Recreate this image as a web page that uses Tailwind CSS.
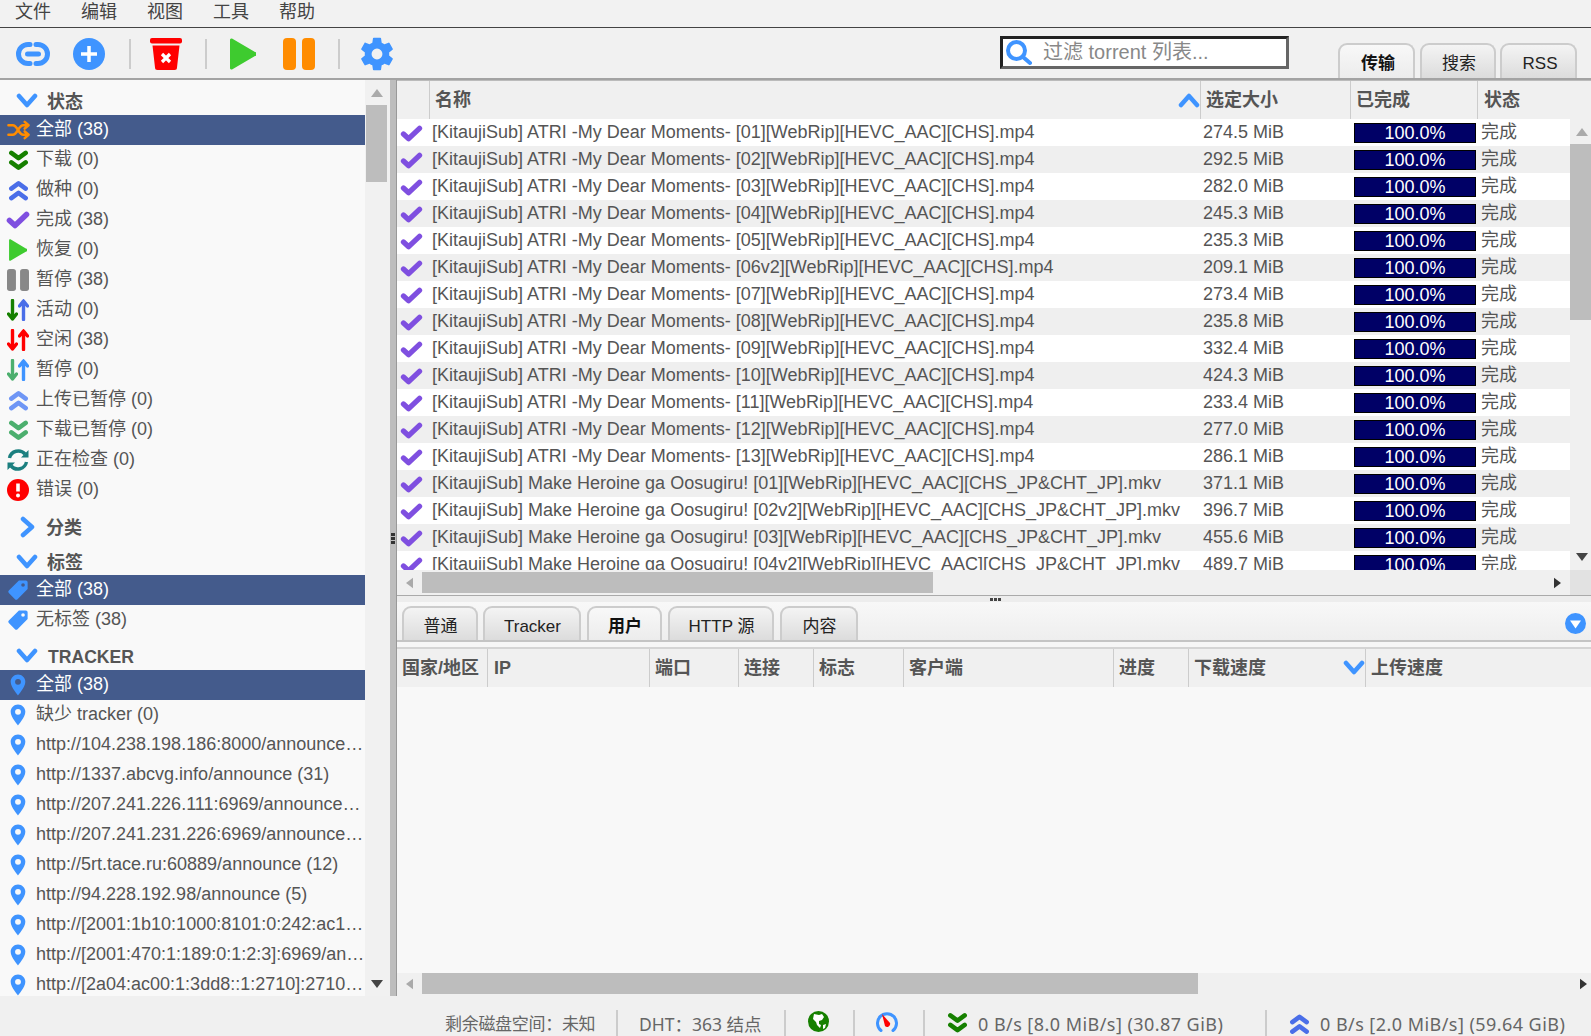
<!DOCTYPE html>
<html lang="zh-CN">
<head>
  <meta charset="UTF-8" />
  <title>qBittorrent WebUI</title>
  <script src="https://cdn.jsdelivr.net/npm/@tailwindcss/browser@4"></script>
</head>
<body class="h-[1036px] w-[1591px] overflow-hidden bg-[#f0f0f0] text-[18px] text-[#555] font-['Liberation_Sans','Noto_Sans_CJK_SC',sans-serif]">
  <svg class="hidden">
    <symbol id="chev-down" viewBox="0 0 22 16"><path d="M3 3l8 9 8-9" fill="none" stroke="currentColor" stroke-width="4.5" stroke-linecap="round" stroke-linejoin="round"/></symbol>
    <symbol id="chev-up" viewBox="0 0 22 16"><path d="M3 13l8-9 8 9" fill="none" stroke="currentColor" stroke-width="4.5" stroke-linecap="round" stroke-linejoin="round"/></symbol>
    <symbol id="chev-right" viewBox="0 0 16 22"><path d="M3 3l9 8-9 8" fill="none" stroke="currentColor" stroke-width="4.5" stroke-linecap="round" stroke-linejoin="round"/></symbol>
    <symbol id="dbl-down" viewBox="0 0 22 22"><path d="M3.500 3l7.500 5.500 7.500-5.500M3.500 13l7.500 5.500 7.500-5.500" fill="none" stroke="currentColor" stroke-width="4.800" stroke-linecap="round" stroke-linejoin="round"/></symbol>
    <symbol id="dbl-up" viewBox="0 0 22 22"><path d="M3.500 9l7.500-5.500 7.500 5.500M3.500 19l7.500-5.500 7.500 5.500" fill="none" stroke="currentColor" stroke-width="4.800" stroke-linecap="round" stroke-linejoin="round"/></symbol>
    <symbol id="check" viewBox="0 0 24 18"><path d="M3.500 9.500l5.500 5L20.500 3.500" fill="none" stroke="currentColor" stroke-width="5.600" stroke-linecap="round" stroke-linejoin="round"/></symbol>
    <symbol id="shuffle" viewBox="0 0 24 20"><path d="M1.500 5H6c5 0 6 10 11 10h5M1.500 15H6c5 0 6-10 11-10h5M18.500 1.500L22.500 5l-4 3.500M18.500 11.500l4 3.500-4 3.500" fill="none" stroke="currentColor" stroke-width="2.600" stroke-linecap="round" stroke-linejoin="round"/></symbol>
    <symbol id="play" viewBox="0 0 26 32"><path d="M2 0.500L25 14a2 2 0 0 1 0 4L2 31.500A1.500 1.500 0 0 1 0 30V2A1.500 1.500 0 0 1 2 0.500z" fill="currentColor"/></symbol>
    <symbol id="pause" viewBox="0 0 32 32"><rect x="0" y="0" width="13" height="32" rx="4" fill="currentColor"/><rect x="19" y="0" width="13" height="32" rx="4" fill="currentColor"/></symbol>
    <symbol id="arrow-down" viewBox="0 0 11 22"><path d="M5.500 20L1.500 15M5.500 20L9.500 15M5.500 20V1.500" fill="none" stroke="currentColor" stroke-width="3.400" stroke-linecap="round" stroke-linejoin="round"/></symbol>
    <symbol id="arrow-up" viewBox="0 0 11 22"><path d="M5.500 2L1.500 7M5.500 2L9.500 7M5.500 2v18.500" fill="none" stroke="currentColor" stroke-width="3.400" stroke-linecap="round" stroke-linejoin="round"/></symbol>
    <symbol id="tag" viewBox="0 0 24 24"><path fill-rule="evenodd" d="M13 1.500H20.500a2 2 0 0 1 2 2V11L11.500 22a2 2 0 0 1-2.800 0L2 15.300a2 2 0 0 1 0-2.800zM17.500 4.500a2 2 0 1 0 0 4 2 2 0 0 0 0-4z" fill="currentColor"/></symbol>
    <symbol id="pin" viewBox="4.500 1.500 15 21"><path fill-rule="evenodd" d="M12 2C8.130 2 5 5.130 5 9c0 5.250 7 13 7 13s7-7.750 7-13c0-3.870-3.130-7-7-7zm0 9.800a2.800 2.800 0 0 1 0-5.600 2.800 2.800 0 0 1 0 5.600z" fill="currentColor"/></symbol>
    <symbol id="tri-up" viewBox="0 0 12 8"><path d="M6 0l6 8H0z" fill="currentColor"/></symbol>
    <symbol id="tri-down" viewBox="0 0 12 8"><path d="M6 8L0 0h12z" fill="currentColor"/></symbol>
    <symbol id="tri-left" viewBox="0 0 8 12"><path d="M0 6l8-6v12z" fill="currentColor"/></symbol>
    <symbol id="tri-right" viewBox="0 0 8 12"><path d="M8 6L0 0v12z" fill="currentColor"/></symbol>
  </svg>

  <div class="flex h-full flex-col">
    <!-- Menu -->
    <div class="flex h-[28px] shrink-0 items-center gap-[30px] border-b border-[#444] bg-[#f2f2f2] pl-[15px] pb-[2px] text-[#444]">
      <span>文件</span><span>编辑</span><span>视图</span><span>工具</span><span>帮助</span>
    </div>

    <!-- Toolbar -->
    <div class="flex h-[52px] shrink-0 items-center border-b-2 border-[#a3a3a3] bg-[#f1f1f1]">
      <svg class="ml-[16px] mt-[2px] h-[26px] w-[34px] text-[#3f94ff]" viewBox="0 0 34 26"><path d="M14 3.500h-2a9.500 9.500 0 0 0 0 19h2M20 3.500h2a9.500 9.500 0 0 1 0 19h-2" fill="none" stroke="currentColor" stroke-width="5" stroke-linecap="round"/><path d="M11.500 13h11" stroke="currentColor" stroke-width="5" stroke-linecap="round"/></svg>
      <svg class="ml-[23px] mt-[2px] h-[32px] w-[32px] text-[#3f94ff]" viewBox="0 0 32 32"><circle cx="16" cy="16" r="16" fill="currentColor"/><path d="M16 8v16M8 16h16" stroke="#fff" stroke-width="3.500"/></svg>
      <div class="ml-[24px] mt-[2px] h-[30px] w-[2px] bg-[#ccc]"></div>
      <svg class="ml-[19px] mt-[2px] h-[32px] w-[32px]" viewBox="0 0 32 32"><rect width="32" height="5.500" rx="2" fill="#ff0000"/><path d="M2.500 7.500h27L27 29.500a2.500 2.500 0 0 1-2.500 2.500h-17A2.500 2.500 0 0 1 5 29.500z" fill="#ff0000"/><path d="M12 16l8 8M20 16l-8 8" stroke="#fff" stroke-width="3.200"/></svg>
      <div class="ml-[23px] mt-[2px] h-[30px] w-[2px] bg-[#ccc]"></div>
      <svg class="ml-[23px] mt-[2px] h-[32px] w-[26px] text-[#3ecb2f]"><use href="#play"/></svg>
      <svg class="ml-[27px] mt-[2px] h-[32px] w-[32px] text-[#ff8c00]"><use href="#pause"/></svg>
      <div class="ml-[23px] mt-[2px] h-[30px] w-[2px] bg-[#ccc]"></div>
      <svg class="ml-[20px] mt-[2px] h-[34px] w-[34px] text-[#3f94ff]" viewBox="2.300 2 19.400 20"><path fill="currentColor" d="M19.140 12.940c.04-.3.06-.61.06-.94 0-.32-.02-.64-.07-.94l2.030-1.580a.49.49 0 0 0 .12-.61l-1.920-3.320a.488.488 0 0 0-.59-.22l-2.390.96c-.5-.38-1.030-.7-1.620-.94l-.36-2.540a.484.484 0 0 0-.48-.41h-3.840c-.24 0-.43.17-.47.41l-.36 2.540c-.59.24-1.130.57-1.620.94l-2.390-.96c-.22-.08-.47 0-.59.22L2.740 8.870c-.12.21-.08.47.12.61l2.030 1.580c-.05.3-.09.63-.09.94s.02.64.07.94l-2.030 1.580a.49.49 0 0 0-.12.61l1.920 3.320c.12.22.37.29.59.22l2.390-.96c.5.38 1.030.7 1.620.94l.36 2.540c.05.24.24.41.48.41h3.840c.24 0 .44-.17.47-.41l.36-2.540c.59-.24 1.130-.56 1.620-.94l2.390.96c.22.08.47 0 .59-.22l1.920-3.320c.12-.22.07-.47-.12-.61l-2.010-1.580zM12 15.200a3.200 3.200 0 1 1 0-6.400 3.200 3.200 0 0 1 0 6.400z"/></svg>

      <!-- Search -->
      <div class="ml-[606px] mt-[-2px] flex h-[33px] w-[289px] items-center border-[3px] border-t-[#222] border-l-[#222] border-b-[#666] border-r-[#666] bg-white">
        <svg class="ml-[2px] h-[27px] w-[27px] text-[#3f94ff]" viewBox="0 0 27 27"><circle cx="11.500" cy="11.500" r="8.500" fill="none" stroke="currentColor" stroke-width="4"/><path d="M18 18l7 6" stroke="currentColor" stroke-width="4" stroke-linecap="round"/></svg>
        <span class="ml-[11px] text-[20px] text-[#888]">过滤 torrent 列表...</span>
      </div>

      <!-- Top tabs -->
      <div class="ml-[49px] flex h-[35px] gap-[5px] self-end text-[17px]">
        <div class="flex w-[77px] items-center justify-center rounded-t-[9px] border-2 border-b-0 border-[#ccc] bg-gradient-to-b from-[#f8f8f8] to-[#ececec] pl-[3px] pt-[5px] font-bold text-[#111]">传输</div>
        <div class="flex w-[76px] items-center justify-center rounded-t-[9px] border-2 border-b-0 border-[#ccc] bg-gradient-to-b from-[#f4f4f4] to-[#dcdcdc] pl-[2px] pt-[5px] text-[#222]">搜索</div>
        <div class="-ml-[1px] flex w-[77px] items-center justify-center rounded-t-[9px] border-2 border-b-0 border-[#ccc] bg-gradient-to-b from-[#f4f4f4] to-[#dcdcdc] pl-[3px] pt-[5px] text-[#222]">RSS</div>
      </div>
    </div>

    <!-- Main -->
    <div class="flex h-[916px] shrink-0">
      <!-- Sidebar -->
      <div class="h-full w-[365px] shrink-0 overflow-hidden bg-[#f9f9f9] leading-[30px]">
        <div class="flex h-[35px] items-center pt-[6px] font-bold"><svg class="ml-[16px] h-[16px] w-[22px] text-[#3f94ff]"><use href="#chev-down"/></svg><span class="ml-[9px] mt-[2px]">状态</span></div>
        <div class="flex h-[30px] items-center bg-[#445b8c] text-white"><svg class="ml-[7px] h-[20px] w-[23px] text-[#ff8c00]"><use href="#shuffle"/></svg><span class="-mt-[2px] ml-[6px]">全部 (38)</span></div>
        <div class="flex h-[30px] items-center"><svg class="ml-[8px] h-[21px] w-[21px] text-[#168000]"><use href="#dbl-down"/></svg><span class="-mt-[2px] ml-[7px]">下载 (0)</span></div>
        <div class="flex h-[30px] items-center"><svg class="ml-[8px] h-[21px] w-[21px] text-[#4a6ee8]"><use href="#dbl-up"/></svg><span class="-mt-[2px] ml-[7px]">做种 (0)</span></div>
        <div class="flex h-[30px] items-center"><svg class="ml-[6px] h-[18px] w-[24px] text-[#7f4fe0]"><use href="#check"/></svg><span class="-mt-[2px] ml-[6px]">完成 (38)</span></div>
        <div class="flex h-[30px] items-center"><svg class="ml-[9px] h-[22px] w-[18px] text-[#3ecb2f]"><use href="#play"/></svg><span class="-mt-[2px] ml-[9px]">恢复 (0)</span></div>
        <div class="flex h-[30px] items-center"><svg class="ml-[7px] h-[22px] w-[22px] text-[#888]"><use href="#pause"/></svg><span class="-mt-[2px] ml-[7px]">暂停 (38)</span></div>
        <div class="flex h-[30px] items-center"><svg class="ml-[7px] h-[22px] w-[11px] text-[#168000]"><use href="#arrow-down"/></svg><svg class="h-[22px] w-[11px] text-[#4a6ee8]"><use href="#arrow-up"/></svg><span class="-mt-[2px] ml-[7px]">活动 (0)</span></div>
        <div class="flex h-[30px] items-center"><svg class="ml-[7px] h-[22px] w-[11px] text-[#ff0000]"><use href="#arrow-down"/></svg><svg class="h-[22px] w-[11px] text-[#ff0000]"><use href="#arrow-up"/></svg><span class="-mt-[2px] ml-[7px]">空闲 (38)</span></div>
        <div class="flex h-[30px] items-center"><svg class="ml-[7px] h-[22px] w-[11px] text-[#4caf6e]"><use href="#arrow-down"/></svg><svg class="h-[22px] w-[11px] text-[#3f94ff]"><use href="#arrow-up"/></svg><span class="-mt-[2px] ml-[7px]">暂停 (0)</span></div>
        <div class="flex h-[30px] items-center"><svg class="ml-[8px] h-[21px] w-[21px] text-[#6f96f5]"><use href="#dbl-up"/></svg><span class="-mt-[2px] ml-[7px]">上传已暂停 (0)</span></div>
        <div class="flex h-[30px] items-center"><svg class="ml-[8px] h-[21px] w-[21px] text-[#4caf6e]"><use href="#dbl-down"/></svg><span class="-mt-[2px] ml-[7px]">下载已暂停 (0)</span></div>
        <div class="flex h-[30px] items-center"><svg class="ml-[7px] h-[22px] w-[22px] text-[#1b7f7f]" viewBox="0 0 22 22"><path d="M2.500 9a9 9 0 0 1 15.500-4M19.500 13a9 9 0 0 1-15.500 4" fill="none" stroke="currentColor" stroke-width="3.400"/><path d="M21.500 1v7.500h-7.500zM.5 21v-7.500h7.500z" fill="currentColor"/></svg><span class="-mt-[2px] ml-[7px]">正在检查 (0)</span></div>
        <div class="flex h-[30px] items-center"><svg class="ml-[7px] h-[22px] w-[22px]" viewBox="0 0 22 22"><circle cx="11" cy="11" r="11" fill="#ff0000"/><path d="M11 4.500v8" stroke="#fff" stroke-width="3.600"/><circle cx="11" cy="16.500" r="2" fill="#fff"/></svg><span class="-mt-[2px] ml-[7px]">错误 (0)</span></div>
        <div class="flex h-[44px] items-center font-bold"><svg class="ml-[20px] h-[22px] w-[16px] text-[#3f94ff]"><use href="#chev-right"/></svg><span class="ml-[10px] mt-[2px]">分类</span></div>
        <div class="flex h-[26px] items-center font-bold"><svg class="ml-[16px] h-[16px] w-[22px] text-[#3f94ff]"><use href="#chev-down"/></svg><span class="ml-[9px] mt-[2px]">标签</span></div>
        <div class="flex h-[30px] items-center bg-[#445b8c] text-white"><svg class="ml-[7px] h-[22px] w-[22px] text-[#3f94ff]"><use href="#tag"/></svg><span class="-mt-[2px] ml-[7px]">全部 (38)</span></div>
        <div class="flex h-[30px] items-center"><svg class="ml-[7px] h-[22px] w-[22px] text-[#3f94ff]"><use href="#tag"/></svg><span class="-mt-[2px] ml-[7px]">无标签 (38)</span></div>
        <div class="flex h-[35px] items-center pt-[7px] font-bold"><svg class="ml-[16px] h-[16px] w-[22px] text-[#3f94ff]"><use href="#chev-down"/></svg><span class="ml-[10px] mt-[2px] text-[17.6px]">TRACKER</span></div>
        <div class="flex h-[30px] items-center bg-[#445b8c] text-white"><svg class="ml-[9px] h-[22px] w-[18px] text-[#3f94ff]"><use href="#pin"/></svg><span class="-mt-[2px] ml-[9px]">全部 (38)</span></div>
        <div class="flex h-[30px] items-center"><svg class="ml-[9px] h-[22px] w-[18px] shrink-0 text-[#3f94ff]"><use href="#pin"/></svg><span class="-mt-[2px] ml-[9px]">缺少 tracker (0)</span></div>
        <div id="trackers"></div>
      </div>
      <!-- Sidebar scrollbar -->
      <div class="flex h-full w-[25px] shrink-0 flex-col items-center bg-[#f1f1f1] pr-[3px]">
        <svg class="ml-[2px] mt-[9px] h-[8px] w-[12px] text-[#aaa]"><use href="#tri-up"/></svg>
        <div class="mt-[8px] h-[77px] w-[21px] bg-[#bdbdbd]"></div>
        <svg class="ml-[2px] mt-[798px] h-[8px] w-[12px] text-[#444]"><use href="#tri-down"/></svg>
      </div>
      <!-- Vertical splitter -->
      <div class="relative h-full w-[7px] shrink-0 border-r border-[#999] bg-[#bdbdbd]">
        <div class="absolute left-[1px] top-[453px] flex h-[11px] w-[4px] flex-col justify-between">
          <span class="h-[3px] w-[4px] bg-[#333]"></span><span class="h-[3px] w-[4px] bg-[#333]"></span><span class="h-[3px] w-[4px] bg-[#333]"></span>
        </div>
      </div>

      <!-- Right column -->
      <div class="flex min-w-0 flex-1 flex-col">
        <!-- Torrent table -->
        <div class="grid h-[39px] shrink-0 grid-cols-[33px_771px_150px_127px_1fr] border-t border-[#bbb] bg-[#f0f0f0] font-bold leading-[38px]">
          <div class="border-r border-[#ccc]"></div>
          <div class="relative border-r border-[#ccc] pl-[5px]">名称<svg class="absolute right-0 top-[11px] h-[16px] w-[22px] text-[#3f94ff]"><use href="#chev-up"/></svg></div>
          <div class="border-r border-[#ccc] pl-[5px]">选定大小</div>
          <div class="border-r border-[#ccc] pl-[5px]">已完成</div>
          <div class="pl-[6px]">状态</div>
        </div>
        <div class="flex h-[451px] shrink-0">
          <div id="rows" class="w-[1173px] overflow-hidden leading-[27px]"></div>
          <div class="flex w-[21px] flex-col items-center bg-[#f0f0f0]">
            <svg class="ml-[2px] mt-[9px] h-[8px] w-[12px] text-[#aaa]"><use href="#tri-up"/></svg>
            <div class="mt-[8px] h-[176px] w-[21px] bg-[#bdbdbd]"></div>
            <svg class="ml-[2px] mt-[233px] h-[8px] w-[12px] text-[#444]"><use href="#tri-down"/></svg>
          </div>
        </div>
        <!-- Horizontal scrollbar -->
        <div class="flex h-[25px] shrink-0 items-start bg-[#f0f0f0] pt-[2px]">
          <svg class="ml-[9px] mt-[5px] h-[12px] w-[7px] text-[#aaa]"><use href="#tri-left"/></svg>
          <div class="ml-[9px] h-[21px] w-[511px] bg-[#bdbdbd]"></div>
          <svg class="ml-[621px] mt-[5px] h-[12px] w-[7px] text-[#333]"><use href="#tri-right"/></svg>
          <div class="ml-[9px] h-[25px] w-[21px] -mt-[2px] bg-[#e2e2e2]"></div>
        </div>
        <!-- Horizontal splitter -->
        <div class="flex h-[7px] shrink-0 justify-center border-t border-[#aaa] bg-[#ededed] pt-[2px]">
          <span class="ml-[4px] h-[3px] w-[12px] bg-[repeating-linear-gradient(90deg,#444_0_3px,#ededed_3px_4px)]"></span>
        </div>
        <!-- Detail tabs -->
        <div class="flex h-[40px] shrink-0 items-end gap-[6px] border-b-2 border-[#c4c4c4] bg-gradient-to-b from-[#f8f8f8] to-[#eeeeee] pl-[5px] text-[17px]">
          <div class="flex h-[34px] w-[76px] items-center justify-center rounded-t-[9px] border-2 border-b-0 border-[#ccc] bg-gradient-to-b from-[#f4f4f4] to-[#dcdcdc] pl-[1px] pt-[6px] text-[#222]">普通</div>
          <div class="-ml-[1px] flex h-[34px] w-[98px] items-center justify-center rounded-t-[9px] border-2 border-b-0 border-[#ccc] bg-gradient-to-b from-[#f4f4f4] to-[#dcdcdc] pl-[1px] pt-[6px] text-[#222]">Tracker</div>
          <div class="flex h-[34px] w-[75px] items-center justify-center rounded-t-[9px] border-2 border-b-0 border-[#ccc] bg-gradient-to-b from-[#f8f8f8] to-[#ececec] pl-[1px] pt-[6px] font-bold text-[#111]">用户</div>
          <div class="flex h-[34px] w-[106px] items-center justify-center rounded-t-[9px] border-2 border-b-0 border-[#ccc] bg-gradient-to-b from-[#f4f4f4] to-[#dcdcdc] pl-[1px] pt-[6px] text-[#222]">HTTP 源</div>
          <div class="flex h-[34px] w-[78px] items-center justify-center rounded-t-[9px] border-2 border-b-0 border-[#ccc] bg-gradient-to-b from-[#f4f4f4] to-[#dcdcdc] pl-[1px] pt-[6px] text-[#222]">内容</div>
          <svg class="ml-auto mr-[5px] mb-[6px] h-[21px] w-[21px]" viewBox="0 0 21 21"><circle cx="10.500" cy="10.500" r="10.500" fill="#3f94ff"/><path d="M10.500 15.500L5 7.500h11z" fill="#fff"/></svg>
        </div>
        <div class="h-[5px] shrink-0 bg-[#f6f6f6]"></div>
        <!-- Peers table -->
        <div class="grid h-[40px] shrink-0 grid-cols-[91px_162px_89px_75px_90px_210px_75px_177px_1fr] border-t-2 border-[#d4d4d4] bg-[#f0f0f0] font-bold leading-[38px]">
          <div class="border-r border-[#ccc] pl-[5px]">国家/地区</div>
          <div class="border-r border-[#ccc] pl-[6px]">IP</div>
          <div class="border-r border-[#ccc] pl-[5px]">端口</div>
          <div class="border-r border-[#ccc] pl-[5px]">连接</div>
          <div class="border-r border-[#ccc] pl-[5px]">标志</div>
          <div class="border-r border-[#ccc] pl-[5px]">客户端</div>
          <div class="border-r border-[#ccc] pl-[5px]">进度</div>
          <div class="relative border-r border-[#ccc] pl-[5px]">下载速度<svg class="absolute right-0 top-[11px] h-[16px] w-[22px] text-[#3f94ff]"><use href="#chev-down"/></svg></div>
          <div class="pl-[5px]">上传速度</div>
        </div>
        <div class="h-[286px] shrink-0 bg-[#f8f8f8]"></div>
        <div class="flex h-[23px] shrink-0 items-start bg-[#f0f0f0]">
          <svg class="ml-[9px] mt-[5px] h-[12px] w-[7px] text-[#aaa]"><use href="#tri-left"/></svg>
          <div class="ml-[9px] h-[21px] w-[776px] bg-[#bdbdbd]"></div>
          <svg class="ml-[382px] mt-[5px] h-[12px] w-[7px] text-[#333]"><use href="#tri-right"/></svg>
        </div>
      </div>
    </div>

    <!-- Status bar -->
    <div class="flex h-[40px] shrink-0 items-end bg-[#f0f0f0] font-['Noto_Sans','Noto_Sans_CJK_SC',sans-serif] text-[#666]">
      <span class="ml-[445px] -mb-[1px] w-[171px] text-[17px] leading-[26px] tracking-[-0.3px]">剩余磁盘空间：未知</span>
      <div class="h-[26px] w-[2px] bg-[#ccc]"></div>
      <span class="ml-[21px] -mb-[1px] w-[145px] text-[17.5px] leading-[26px]">DHT：363 结点</span>
      <div class="h-[26px] w-[2px] bg-[#ccc]"></div>
      <svg class="ml-[22px] mb-[4px] h-[21px] w-[21px]" viewBox="0 0 21 21"><circle cx="10.500" cy="10.500" r="10.500" fill="#168000"/><path d="M6 3l5 1 3-1 2 3-2 3-3 1 0 3 2 1-1 3-3-3-1-3-3-3zM15 14l3-1-1 4-2 1z" fill="#fff"/></svg>
      <div class="ml-[24px] h-[26px] w-[2px] bg-[#ccc]"></div>
      <svg class="ml-[21px] mb-[4px] h-[21px] w-[22px]" viewBox="0 0 22 21"><path d="M5 19.500a9.500 9.500 0 1 1 12 0" fill="none" stroke="#3f94ff" stroke-width="3" stroke-linecap="round"/><path d="M6 3l8 9a3 3 0 0 1-5 3z" fill="#ff0000"/></svg>
      <div class="ml-[25px] h-[26px] w-[2px] bg-[#ccc]"></div>
      <svg class="ml-[22px] mb-[2px] h-[22px] w-[21px] text-[#168000]"><use href="#dbl-down"/></svg>
      <span class="ml-[10px] -mb-[1px] w-[287px] leading-[26px] tracking-[0.45px]">0 B/s [8.0 MiB/s] (30.87 GiB)</span>
      <div class="h-[26px] w-[2px] bg-[#ccc]"></div>
      <svg class="ml-[22px] mb-[1px] h-[22px] w-[21px] text-[#4a6ee8]"><use href="#dbl-up"/></svg>
      <span class="ml-[10px] -mb-[1px] leading-[26px] tracking-[0.45px]">0 B/s [2.0 MiB/s] (59.64 GiB)</span>
    </div>
  </div>

  <script>
    const atri = ["01", "02", "03", "04", "05", "06v2", "07", "08", "09", "10", "11", "12", "13"];
    const atriSizes = ["274.5", "292.5", "282.0", "245.3", "235.3", "209.1", "273.4", "235.8", "332.4", "424.3", "233.4", "277.0", "286.1"];
    const torrents = atri.map((n, i) => [`[KitaujiSub] ATRI -My Dear Moments- [${n}][WebRip][HEVC_AAC][CHS].mp4`, atriSizes[i]]);
    [["01", "371.1"], ["02v2", "396.7"], ["03", "455.6"], ["04v2", "489.7"]].forEach(([n, s]) => {
      torrents.push([`[KitaujiSub] Make Heroine ga Oosugiru! [${n}][WebRip][HEVC_AAC][CHS_JP&CHT_JP].mkv`, s]);
    });

    document.getElementById("rows").innerHTML = torrents.map(([name, size], i) => `
      <div class="grid h-[27px] grid-cols-[32px_771px_150px_128px_1fr] ${i % 2 ? "bg-[#efefef]" : "bg-white"}">
        <div class="flex items-center pl-[3px] pt-[1px]"><svg class="h-[17px] w-[23px] text-[#7f4fe0]"><use href="#check"/></svg></div>
        <div class="overflow-hidden whitespace-nowrap pl-[3px]">${name.replace("&", "&amp;")}</div>
        <div class="pl-[3px]">${size} MiB</div>
        <div class="flex items-center"><div class="ml-[4px] h-[20px] w-[122px] border border-black bg-[#000066] text-center leading-[18px] text-white">100.0%</div></div>
        <div class="pl-[3px]">完成</div>
      </div>`).join("");

    const trackers = [
      "http://104.238.198.186:8000/announce…",
      "http://1337.abcvg.info/announce (31)",
      "http://207.241.226.111:6969/announce…",
      "http://207.241.231.226:6969/announce…",
      "http://5rt.tace.ru:60889/announce (12)",
      "http://94.228.192.98/announce (5)",
      "http://[2001:1b10:1000:8101:0:242:ac1…",
      "http://[2001:470:1:189:0:1:2:3]:6969/an…",
      "http://[2a04:ac00:1:3dd8::1:2710]:2710…"
    ];
    document.getElementById("trackers").innerHTML = trackers.map(t => `
      <div class="flex h-[30px] items-center"><svg class="ml-[9px] h-[22px] w-[18px] shrink-0 text-[#3f94ff]"><use href="#pin"/></svg><span class="-mt-[2px] ml-[9px] whitespace-nowrap">${t}</span></div>`).join("");
  </script>
</body>
</html>
